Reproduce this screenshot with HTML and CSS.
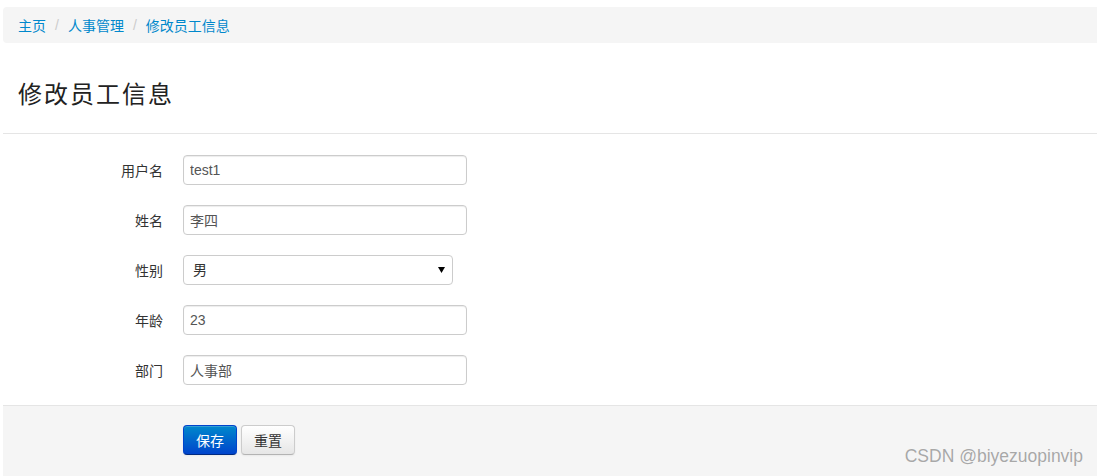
FILE: index.html
```html
<!DOCTYPE html>
<html lang="zh">
<head>
<meta charset="utf-8">
<title>修改员工信息</title>
<link rel="stylesheet" href="styles.css">
</head>
<body>
<div class="page">
  <ul class="breadcrumb">
    <li><a href="#">主页</a></li>
    <li class="divider">/</li>
    <li><a href="#">人事管理</a></li>
    <li class="divider">/</li>
    <li><a href="#">修改员工信息</a></li>
  </ul>
  <div class="page-header">
    <h1>修改员工信息</h1>
  </div>
  <form class="form-horizontal">
    <div class="fields">
      <div class="row">
        <label class="label">用户名</label>
        <input class="input" type="text" value="test1">
      </div>
      <div class="row">
        <label class="label">姓名</label>
        <input class="input" type="text" value="李四">
      </div>
      <div class="row">
        <label class="label">性别</label>
        <div class="select-wrap">
          <select class="select">
            <option>男</option>
            <option>女</option>
          </select>
          <svg class="caret" width="7" height="6" viewBox="0 0 7 6"><path d="M0 0H7L3.5 6Z" fill="#000"/></svg>
        </div>
      </div>
      <div class="row">
        <label class="label">年龄</label>
        <input class="input" type="text" value="23">
      </div>
      <div class="row">
        <label class="label">部门</label>
        <input class="input" type="text" value="人事部">
      </div>
    </div>
    <div class="form-actions">
      <button type="button" class="btn btn-primary">保存</button>
      <button type="reset" class="btn">重置</button>
    </div>
  </form>
  <div class="watermark">CSDN @biyezuopinvip</div>
</div>
</body>
</html>
```
FILE: styles.css
```css
html, body {
  margin: 0;
  padding: 0;
  background: #fff;
}
body {
  font-family: "Liberation Sans", Arial, "Noto Sans CJK SC", sans-serif;
  font-size: 14px;
  color: #333;
}
.page {
  position: relative;
  padding: 7px 0 0 3px;
  height: 469px;
  overflow: hidden;
}
.breadcrumb {
  display: flex;
  align-items: center;
  list-style: none;
  margin: 0;
  padding: 0 15px;
  height: 36px;
  background: #f5f5f5;
  border-radius: 4px 0 0 4px;
}
.breadcrumb a {
  color: #0088cc;
  text-decoration: none;
}
.breadcrumb .divider {
  color: #ccc;
  margin: 0 9px;
}
.page-header {
  padding: 35px 15px 25px;
  border-bottom: 1px solid #e5e5e5;
}
.page-header h1 {
  margin: 0;
  font-family: "Noto Sans CJK SC", sans-serif;
  font-size: 24px;
  font-weight: normal;
  line-height: 30px;
  color: #222;
  letter-spacing: 2px;
}
.form-horizontal {
  margin: 0;
}
.fields {
  padding-top: 21px;
  display: flex;
  flex-direction: column;
  gap: 20px;
  padding-bottom: 20px;
}
.row {
  display: flex;
  align-items: center;
  height: 30px;
}
.label {
  width: 160px;
  text-align: right;
  margin-right: 20px;
  color: #333;
}
.input {
  box-sizing: border-box;
  width: 284px;
  height: 30px;
  padding: 4px 6px;
  border: 1px solid #ccc;
  border-radius: 4px;
  font-family: "Liberation Sans", Arial, "Noto Sans CJK SC", sans-serif;
  font-size: 14px;
  color: #555;
  box-shadow: inset 0 1px 1px rgba(0,0,0,0.075);
  outline: none;
}
.select-wrap {
  position: relative;
  width: 270px;
  height: 30px;
}
.select {
  box-sizing: border-box;
  width: 270px;
  height: 30px;
  padding: 0 9px;
  border: 1px solid #ccc;
  border-radius: 4px;
  background: #fff;
  font-family: "Liberation Sans", Arial, "Noto Sans CJK SC", sans-serif;
  font-size: 14px;
  color: #333;
  -webkit-appearance: none;
  appearance: none;
  outline: none;
}
.caret {
  position: absolute;
  left: 255px;
  top: 12px;
}
.form-actions {
  padding: 19px 0 21px 180px;
  background: #f5f5f5;
  border-top: 1px solid #e5e5e5;
  display: flex;
  gap: 4px;
}
.btn {
  box-sizing: border-box;
  height: 30px;
  width: 54px;
  padding: 0;
  font-family: "Liberation Sans", Arial, "Noto Sans CJK SC", sans-serif;
  font-size: 14px;
  color: #333;
  border: 1px solid #ccc;
  border-bottom-color: #b3b3b3;
  border-radius: 4px;
  background: linear-gradient(#ffffff, #e6e6e6);
  box-shadow: inset 0 1px 0 rgba(255,255,255,0.2), 0 1px 2px rgba(0,0,0,0.05);
  cursor: pointer;
}
.btn-primary {
  color: #fff;
  border-color: #0044cc #0044cc #002a80;
  background: linear-gradient(#0088cc, #0044cc);
}
.watermark {
  position: absolute;
  right: 14px;
  top: 446px;
  font-family: "Liberation Sans", Arial, sans-serif;
  font-size: 17.5px;
  color: #a8a8a8;
  text-shadow: 0 0 1px #fff;
}
```
